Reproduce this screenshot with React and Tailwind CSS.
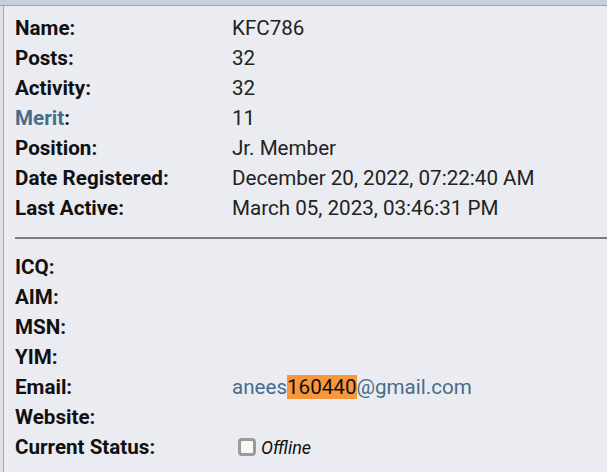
import React from 'react';

const top = [
  ['Name:', 'KFC786'],
  ['Posts:', '32'],
  ['Activity:', '32'],
  ['Merit', '11', true],
  ['Position:', 'Jr. Member'],
  ['Date Registered:', 'December 20, 2022, 07:22:40 AM'],
  ['Last Active:', 'March 05, 2023, 03:46:31 PM'],
];

const contact = ['ICQ:', 'AIM:', 'MSN:', 'YIM:'];

function Row({ label, children }) {
  return (
    <div className="flex h-[30px] items-center">
      <div className="w-[217px] shrink-0 font-bold text-[#111]">{label}</div>
      <div className="text-[#222]">{children}</div>
    </div>
  );
}

export default function App() {
  return (
    <div className="w-[607px] h-[472px] overflow-hidden bg-[#e1e1e3] font-['Roboto',sans-serif] text-[20.6px]">
      <div className="h-[6px] bg-[#c5d0db] border-b border-[#9ea6ae]" />
      <div className="ml-[3px] h-[466px] border-l border-[#a9a9ad] bg-[#ebecf1] pl-[11px] pt-[7px]">
        {top.map(([l, v, merit]) => (
          <Row
            key={l}
            label={merit ? (<><span className="text-[#476c8e]">Merit</span>:</>) : l}
          >
            {v}
          </Row>
        ))}
        <div className="mt-[14px] mb-[13px] h-[2px] bg-[#7d7e82]" />
        {contact.map((l) => (
          <Row key={l} label={l} />
        ))}
        <Row label="Email:">
          <span className="text-[#476c8e]">
            anees<span className="bg-[#f7963b] text-[#111]">160440</span>@gmail.com
          </span>
        </Row>
        <Row label="Website:" />
        <Row label="Current Status:">
          <span className="flex items-center gap-[5px] pl-[6px]">
            <span className="w-[18px] h-[18px] shrink-0 rounded-[4px] border-[3px] border-[#9b9b9b] bg-[#f7f7f7]" />
            <span className="italic text-[18px] text-[#111]">Offline</span>
          </span>
        </Row>
      </div>
    </div>
  );
}
